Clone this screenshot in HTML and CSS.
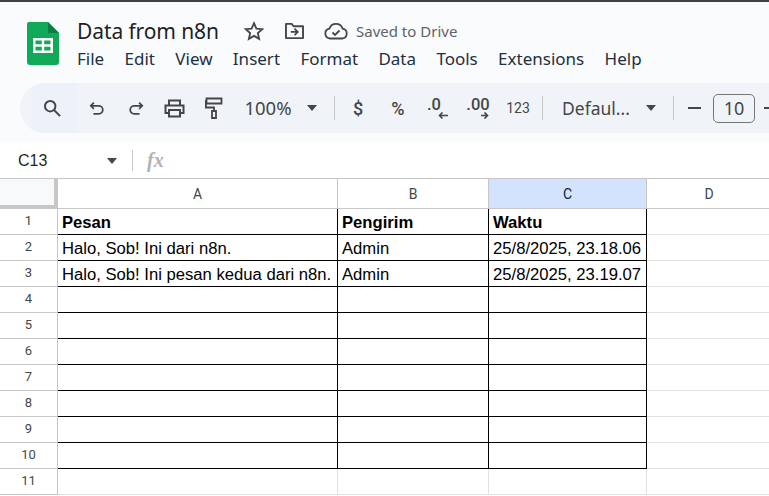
FILE: index.html
```html
<!DOCTYPE html>
<html lang="en">
<head>
<meta charset="utf-8">
<title>Data from n8n</title>
<link rel="stylesheet" href="styles.css">
</head>
<body>
<div class="topline"></div>
<header class="appbar">
  <svg class="logo" width="32" height="43" viewBox="0 0 32 43">
    <path d="M2 0H21L32 11V40a3 3 0 0 1-3 3H3a3 3 0 0 1-3-3V2a2 2 0 0 1 2-2Z" fill="#0fa958"/>
    <path d="M21 0L32 11H21Z" fill="#0a7f3f"/>
    <path d="M6 16H26V31H6ZM8.500 18.500V22.300H14.800V18.500ZM17.200 18.500V22.300H23.500V18.500ZM8.500 24.700V28.500H14.800V24.700ZM17.200 24.700V28.500H23.500V24.700Z" fill="#fff" fill-rule="evenodd"/>
  </svg>
  <div class="titles">
    <div class="titlerow">
      <span class="doctitle">Data from n8n</span>
      <svg class="ico star" width="22" height="22" viewBox="0 0 24 24" fill="none" stroke="#444746" stroke-width="2"><path d="M12 3.500l2.600 5.900 6.400.6-4.800 4.300 1.400 6.300L12 17.300l-5.600 3.300 1.400-6.300L3 10l6.400-.6Z" stroke-linejoin="miter"/></svg>
      <svg class="ico folder" width="21" height="18" viewBox="0 0 22 19" fill="none" stroke="#444746" stroke-width="2"><path d="M2 2h6l2 2.500h10V17H2Z" stroke-linejoin="round"/><path d="M7 10.500h7M11 7l3.500 3.500L11 14" stroke-width="1.800"/></svg>
      <svg class="ico cloud" width="24" height="18" viewBox="0 0 24 18" fill="none" stroke="#444746" stroke-width="1.800"><path d="M6 16.500a5 5 0 0 1-.6-9.900A7 7 0 0 1 18.600 6.600a5 5 0 0 1-.4 9.900Z"/><path d="M8.500 10.500l2.500 2.500 4.500-4.500"/></svg>
      <span class="saved">Saved to Drive</span>
    </div>
    <nav class="menus">
      <span>File</span><span>Edit</span><span>View</span><span>Insert</span><span>Format</span><span>Data</span><span>Tools</span><span>Extensions</span><span>Help</span>
    </nav>
  </div>
</header>
<div class="toolbarwrap">
  <div class="toolbar">
    <span class="tool searchbox">
      <svg width="18" height="18" viewBox="0 0 20 20" fill="none" stroke="#444746" stroke-width="2.200"><circle cx="8" cy="8" r="5.800"/><path d="M12 12l7 7"/></svg>
    </span>
    <span class="tool w39">
      <svg width="16" height="15" viewBox="0 0 18 16" fill="none" stroke="#444746" stroke-width="2"><path d="M5.500 1.500L2 5l3.500 3.500M2 5h9a4.500 4.500 0 0 1 0 9H5"/></svg>
    </span>
    <span class="tool w39">
      <svg width="16" height="15" viewBox="0 0 18 16" fill="none" stroke="#444746" stroke-width="2"><path d="M12.500 1.500L16 5l-3.500 3.500M16 5H7a4.500 4.500 0 0 0 0 9h6"/></svg>
    </span>
    <span class="tool w39">
      <svg width="21" height="19" viewBox="0 0 21 19" fill="none" stroke="#444746" stroke-width="2"><path d="M5 6V1.500h11V6M5 14H1.500V6.500h18V14H16"/><path d="M5 11h11v6.500H5Z"/></svg>
    </span>
    <span class="tool w39">
      <svg width="18" height="22" viewBox="0 0 18 22" fill="none" stroke="#444746" stroke-width="1.800"><path d="M1.500 1.500h15v5h-15Z"/><path d="M1.500 4H0.900V10.500H9V14"/><path d="M7 14h4v7H7Z"/></svg>
    </span>
    <span class="zoomtext">100%</span>
    <span class="caret zoomcaret"></span>
    <span class="sep sep1"></span>
    <span class="tool w40 sym first">$</span>
    <span class="tool w40 sym">%</span>
    <span class="tool w40 dec"><b class="onezero">.0</b><svg class="arrowleft" width="10" height="7" viewBox="0 0 10 7" fill="none" stroke="#444746" stroke-width="1.600"><path d="M10 3.500H1.500M4.500 .5l-3 3 3 3"/></svg></span>
    <span class="tool w40 dec"><b>.00</b><svg class="arrowright" width="8" height="7" viewBox="0 0 8 7" fill="none" stroke="#444746" stroke-width="1.600"><path d="M0 3.500h6.500M3.500 .5l3 3-3 3"/></svg></span>
    <span class="tool w40 num">123</span>
    <span class="sep sep2"></span>
    <span class="fontname">Defaul...</span>
    <span class="caret fontcaret"></span>
    <span class="sep sep3"></span>
    <span class="minus"></span>
    <span class="sizebox">10</span>
    <span class="plus"></span>
  </div>
</div>
<div class="formulabar">
  <span class="namebox">C13</span>
  <span class="caret namecaret"></span>
  <span class="fsep"></span>
  <span class="fx">fx</span>
</div>
<main class="sheet">
  <div class="corner"></div><div class="colh">A</div><div class="colh">B</div><div class="colh selected">C</div><div class="colh">D</div>

  <div class="rowh">1</div><div class="cell head">Pesan</div><div class="cell head">Pengirim</div><div class="cell head">Waktu</div><div class="free"></div>
  <div class="rowh">2</div><div class="cell">Halo, Sob! Ini dari n8n.</div><div class="cell">Admin</div><div class="cell">25/8/2025, 23.18.06</div><div class="free"></div>
  <div class="rowh">3</div><div class="cell">Halo, Sob! Ini pesan kedua dari n8n.</div><div class="cell">Admin</div><div class="cell">25/8/2025, 23.19.07</div><div class="free"></div>
  <div class="rowh">4</div><div class="cell"></div><div class="cell"></div><div class="cell"></div><div class="free"></div>
  <div class="rowh">5</div><div class="cell"></div><div class="cell"></div><div class="cell"></div><div class="free"></div>
  <div class="rowh">6</div><div class="cell"></div><div class="cell"></div><div class="cell"></div><div class="free"></div>
  <div class="rowh">7</div><div class="cell"></div><div class="cell"></div><div class="cell"></div><div class="free"></div>
  <div class="rowh">8</div><div class="cell"></div><div class="cell"></div><div class="cell"></div><div class="free"></div>
  <div class="rowh">9</div><div class="cell"></div><div class="cell"></div><div class="cell"></div><div class="free"></div>
  <div class="rowh">10</div><div class="cell"></div><div class="cell"></div><div class="cell"></div><div class="free"></div>
  <div class="rowh">11</div><div class="free"></div><div class="free"></div><div class="free"></div><div class="free"></div>
</main>
</body>
</html>
```
FILE: styles.css
```css
* { box-sizing: border-box; }
html, body { margin: 0; height: 496px; overflow: hidden; }
body { width: 769px; background: #fff; font-family: "Roboto", "Liberation Sans", sans-serif; color: #1f1f1f; }
.topline { height: 2px; background: #3f4043; }
.appbar { height: 68px; background: #f9fbfd; display: flex; padding: 0 0 0 27px; }
.logo { margin-top: 20px; flex: none; }
.titles { margin-left: 18px; flex: 1; }
.titlerow { display: flex; align-items: center; height: 24px; margin-top: 17px; }
.doctitle { font: 21px/22px "Noto Sans", sans-serif; letter-spacing: -0.1px; width: 166px; }
.ico { flex: none; }
.folder { margin-left: 19px; }
.cloud { margin-left: 19px; }
.saved { font: 15px/22px "Noto Sans", sans-serif; color: #5f6368; margin-left: 8px; }
.menus { display: flex; gap: 20.350px; margin-top: 6px; font: 17px/20px "Noto Sans", sans-serif; color: #1f2f3f; }
.toolbarwrap { height: 72px; background: #f9fbfd; padding: 13px 0 0 20px; }
.toolbar { height: 50px; width: 760px; background: #f0f4f9; border-radius: 25px 0 0 25px; display: flex; align-items: center; padding-left: 11px; color: #444746; overflow: hidden; }
.tool { display: flex; align-items: center; justify-content: center; flex: none; }
.searchbox { width: 46px; height: 50px; background: #edf2fa; padding-right: 4px; }
.w39 { width: 39px; }
.w40 { width: 40px; }
.zoomtext { font: 18.500px/24px "Noto Sans", sans-serif; margin-left: 6px; width: 58px; flex: none; text-align: center; }
.caret { width: 0; height: 0; border: 5.500px solid transparent; border-top: 6px solid #444746; border-bottom: 0; flex: none; }
.zoomcaret { margin-left: 10px; }
.sep { width: 1px; height: 24px; background: #c7c7c7; flex: none; }
.sep1 { margin-left: 17px; }
.sep2 { margin-left: 4px; }
.sep3 { margin-left: 17px; }
.first { margin-left: 3px; }
.sym { font: 500 18px "Roboto", sans-serif; }
.dec { flex-direction: column; font-size: 16.500px; line-height: 13px; }
.dec b { font-weight: 500; font-family: "Roboto", sans-serif; height: 13px; }
.onezero { margin-right: 8px; }
.arrowleft { margin: 1px 0 0 9px; }
.arrowright { margin: 1px 0 0 13px; }
.num { font-size: 14px; }
.fontname { font: 17.500px/24px "Noto Sans", sans-serif; margin-left: 19px; width: 83px; flex: none; }
.fontcaret { margin-left: 1px; }
.minus { width: 13px; height: 2px; background: #444746; margin-left: 14px; flex: none; }
.sizebox { width: 42px; height: 29px; border: 1px solid #747775; border-radius: 5px; margin-left: 12px; font: 18px/27px "Noto Sans", sans-serif; text-align: center; flex: none; }
.plus { width: 13px; height: 2px; background: #444746; margin-left: 9px; flex: none; }
.formulabar { height: 36px; background: #fff; display: flex; align-items: center; padding-top: 1px; }
.namebox { font: 16px "Liberation Sans", sans-serif; margin-left: 18px; width: 89px; color: #1f1f1f; }
.namecaret { margin-top: 1px; }
.fsep { width: 1px; height: 21px; background: #c7c7c7; margin-left: 15px; }
.fx { font: italic 700 20px "Liberation Serif", serif; color: #b0b3b6; margin-left: 14px; }
.sheet { display: grid; width: 772px; grid-template-columns: 58px 280px 151px 158px 1fr; grid-template-rows: 30px repeat(11, 26px); border-top: 1px solid #c7c7c7; }
.corner { background: #f8f9fa; border-right: 4px solid #c7c7c7; border-bottom: 4px solid #c7c7c7; }
.colh { border-right: 1px solid #c7c7c7; border-bottom: 1px solid #c7c7c7; font-size: 14px; line-height: 28px; padding-top: 1px; text-align: center; color: #444746; }
.selected { background: #d3e3fd; color: #041e49; }
.rowh { border-right: 1px solid #c7c7c7; border-bottom: 1px solid #c7c7c7; font-size: 13px; line-height: 24px; text-align: center; color: #444746; }
.cell { border-right: 1px solid #000; border-bottom: 1px solid #000; font: 16.650px/27px "Liberation Sans", sans-serif; padding-left: 4px; color: #000; white-space: nowrap; overflow: hidden; }
.head { font-weight: 700; }
.free { border-right: 1px solid #e1e1e1; border-bottom: 1px solid #e1e1e1; }
```
